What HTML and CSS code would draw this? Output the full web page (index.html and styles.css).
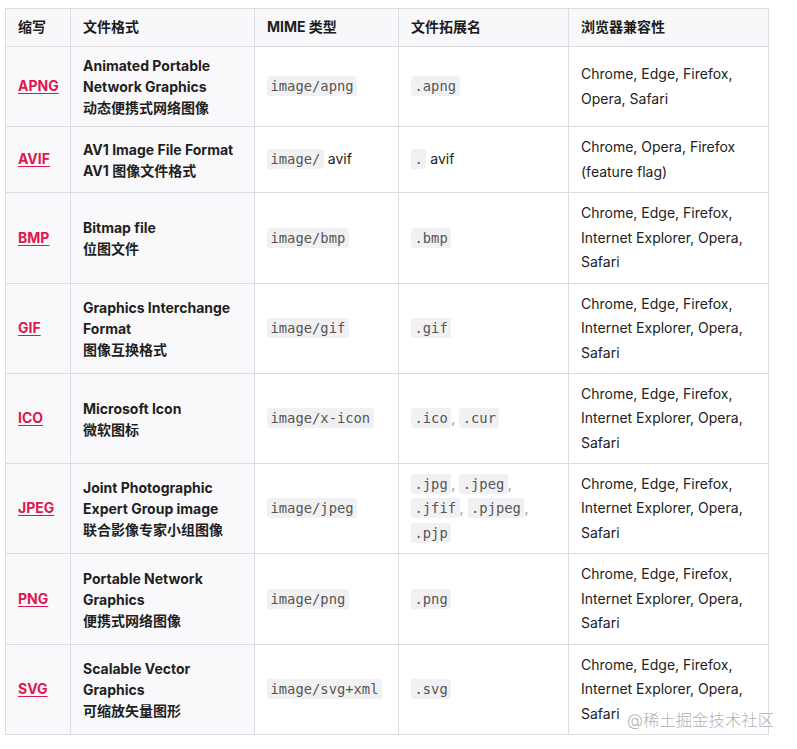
FILE: index.html
```html
<!DOCTYPE html>
<html lang="zh">
<head>
<meta charset="utf-8">
<link rel="stylesheet" href="styles.css">
</head>
<body>
<div class="page">
<table class="formats">
  <colgroup>
    <col class="c-abbr"><col class="c-name"><col class="c-mime"><col class="c-ext"><col class="c-browser">
  </colgroup>
  <thead>
    <tr class="r-head">
      <th>缩写</th><th>文件格式</th><th>MIME 类型</th><th>文件拓展名</th><th>浏览器兼容性</th>
    </tr>
  </thead>
  <tbody>
    <tr class="r-80">
      <td class="abbr"><a href="#">APNG</a></td>
      <td class="name">Animated Portable Network Graphics<br>动态便携式网络图像</td>
      <td><code>image/apng</code></td>
      <td><code>.apng</code></td>
      <td>Chrome, Edge, Firefox, Opera, Safari</td>
    </tr>
    <tr class="r-66">
      <td class="abbr"><a href="#">AVIF</a></td>
      <td class="name">AV1 Image File Format<br>AV1 图像文件格式</td>
      <td><code>image/</code> avif</td>
      <td><code>.</code> avif</td>
      <td>Chrome, Opera, Firefox (feature flag)</td>
    </tr>
    <tr class="r-91">
      <td class="abbr"><a href="#">BMP</a></td>
      <td class="name">Bitmap file<br>位图文件</td>
      <td><code>image/bmp</code></td>
      <td><code>.bmp</code></td>
      <td>Chrome, Edge, Firefox, Internet Explorer, Opera, Safari</td>
    </tr>
    <tr class="r-90">
      <td class="abbr"><a href="#">GIF</a></td>
      <td class="name">Graphics Interchange Format<br>图像互换格式</td>
      <td><code>image/gif</code></td>
      <td><code>.gif</code></td>
      <td>Chrome, Edge, Firefox, Internet Explorer, Opera, Safari</td>
    </tr>
    <tr class="r-90">
      <td class="abbr"><a href="#">ICO</a></td>
      <td class="name">Microsoft Icon<br>微软图标</td>
      <td><code>image/x-icon</code></td>
      <td><code>.ico</code><span class="sep">,</span> <code>.cur</code></td>
      <td>Chrome, Edge, Firefox, Internet Explorer, Opera, Safari</td>
    </tr>
    <tr class="r-90">
      <td class="abbr"><a href="#">JPEG</a></td>
      <td class="name">Joint Photographic Expert Group image<br>联合影像专家小组图像</td>
      <td><code>image/jpeg</code></td>
      <td><code>.jpg</code><span class="sep">,</span> <code>.jpeg</code><span class="sep">,</span> <code>.jfif</code><span class="sep">,</span> <code>.pjpeg</code><span class="sep">,</span> <code>.pjp</code></td>
      <td>Chrome, Edge, Firefox, Internet Explorer, Opera, Safari</td>
    </tr>
    <tr class="r-91">
      <td class="abbr"><a href="#">PNG</a></td>
      <td class="name">Portable Network Graphics<br>便携式网络图像</td>
      <td><code>image/png</code></td>
      <td><code>.png</code></td>
      <td>Chrome, Edge, Firefox, Internet Explorer, Opera, Safari</td>
    </tr>
    <tr class="r-90">
      <td class="abbr"><a href="#">SVG</a></td>
      <td class="name">Scalable Vector Graphics<br>可缩放矢量图形</td>
      <td><code>image/svg+xml</code></td>
      <td><code>.svg</code></td>
      <td>Chrome, Edge, Firefox, Internet Explorer, Opera, Safari</td>
    </tr>
  </tbody>
</table>
<div class="watermark">@稀土掘金技术社区</div>
</div>
</body>
</html>
```

FILE: styles.css
```css
html, body {
  margin: 0;
  padding: 0;
  background: #ffffff;
}

body {
  font-family: Inter, "Noto Sans CJK SC", "Noto Sans", sans-serif;
  font-size: 14px;
  color: #222222;
}

.page {
  position: relative;
  width: 797px;
  height: 749px;
  padding: 8px 0 0 5px;
  box-sizing: border-box;
}

.formats {
  border-collapse: collapse;
  table-layout: fixed;
  width: 764px;
}

.c-abbr { width: 65px; }
.c-name { width: 184px; }
.c-mime { width: 144px; }
.c-ext { width: 170px; }
.c-browser { width: 200px; }

.formats th,
.formats td {
  border: 1px solid #dcdce1;
  padding: 0 12px;
  vertical-align: middle;
  text-align: left;
  line-height: 24.5px;
}

.formats th {
  background: #f8f8fa;
  font-weight: 700;
  color: #1c1c1c;
  font-size: 14px;
}

.formats td:nth-child(1),
.formats td:nth-child(2) {
  background: #f9f9fb;
}

.r-head { height: 38px; }
.r-80 { height: 80px; }
.r-66 { height: 66px; }
.r-90 { height: 90px; }
.r-91 { height: 91px; }

.abbr a {
  color: #e0164e;
  font-weight: 700;
  text-decoration: underline;
  text-underline-offset: 2px;
}

.name {
  font-weight: 700;
  line-height: 21px !important;
  color: #1f1f1f;
}

code {
  font-family: "DejaVu Sans Mono", "Liberation Mono", monospace;
  font-size: 13.8px;
  color: #555555;
  background: #f1f1f3;
  border-radius: 3px;
  padding: 2px 3.5px;
}

.sep {
  color: #9a9a9a;
}

.watermark {
  position: absolute;
  left: 627px;
  top: 707px;
  font-size: 16.4px;
  font-weight: 300;
  color: #b3b3b3;
  white-space: nowrap;
}
```
